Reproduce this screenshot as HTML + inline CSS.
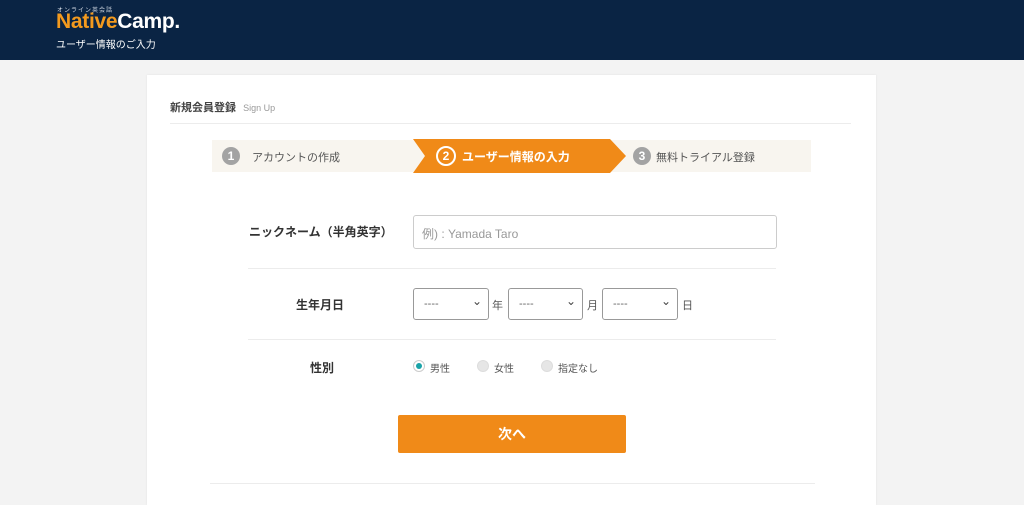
<!DOCTYPE html>
<html><head><meta charset="utf-8"><style>
*{margin:0;padding:0;box-sizing:border-box}
body{width:1024px;height:495px;overflow:hidden;background:#f3f3f3;font-family:"Liberation Sans","Noto Sans CJK JP",sans-serif;position:relative;color:#333}
.a{position:absolute}
.hdr{left:0;top:0;width:1024px;height:60px;background:#0a2444}
.card{left:147px;top:75px;width:729px;height:430px;background:#fff;box-shadow:0 0 2px rgba(0,0,0,.08)}
.hl{height:1px;background:#ececec}
.sel{height:32px;border:1px solid #999;border-radius:3px;background:#fff;font-size:11px;color:#666;padding:9px 10px}
.sel:after{content:"⌄";position:absolute;right:6px;top:5px;font-size:12px;color:#444}
.rad{width:12px;height:12px;border-radius:50%;background:#e6e6e6;border:1px solid #ddd}
.lbl{font-size:12px;font-weight:bold;color:#333}
.sm{font-size:11px;color:#555}
</style></head><body>
<div class="a hdr">
 <div class="a" style="left:57px;top:5px;font-size:6px;color:#cfd6e0;letter-spacing:1px">オンライン英会話</div>
 <div class="a" style="left:56px;top:10px;font-size:21px;font-weight:bold;letter-spacing:-0.3px;color:#fff"><span style="color:#f39a1e">Native</span>Camp.</div>
 <div class="a" style="left:56px;top:36px;font-size:10px;color:#fff">ユーザー情報のご入力</div>
</div>
<div class="a card"></div>
<div class="a" style="left:170px;top:99px;font-size:11px;font-weight:bold;color:#444">新規会員登録 <span style="font-weight:normal;color:#999;font-size:9px;margin-left:4px">Sign Up</span></div>
<div class="a hl" style="left:170px;top:123px;width:681px"></div>
<div class="a" style="left:212px;top:140px;width:599px;height:32px;background:#f8f5ef"></div>
<svg class="a" style="left:412px;top:139px" width="216" height="35"><polygon points="1,0 198,0 214,17 198,34 1,34 13,17" fill="#f08a18"/></svg>
<div class="a" style="left:222px;top:147px;width:18px;height:18px;border-radius:50%;background:#a3a3a3;color:#fff;font-size:12px;font-weight:bold;text-align:center;line-height:18px">1</div>
<div class="a sm" style="left:252px;top:149px">アカウントの作成</div>
<div class="a" style="left:436px;top:146px;width:20px;height:20px;border-radius:50%;border:2px solid #fff;color:#fff;font-size:12px;font-weight:bold;text-align:center;line-height:16px">2</div>
<div class="a" style="left:462px;top:148px;color:#fff;font-size:12px;font-weight:bold">ユーザー情報の入力</div>
<div class="a" style="left:633px;top:147px;width:18px;height:18px;border-radius:50%;background:#a3a3a3;color:#fff;font-size:12px;font-weight:bold;text-align:center;line-height:18px">3</div>
<div class="a sm" style="left:656px;top:149px">無料トライアル登録</div>

<div class="a lbl" style="left:249px;top:223px">ニックネーム（半角英字）</div>
<div class="a" style="left:413px;top:215px;width:364px;height:34px;border:1px solid #ccc;border-radius:3px;font-size:12px;color:#999;padding:9px 8px">例) : Yamada Taro</div>
<div class="a hl" style="left:248px;top:268px;width:528px"></div>
<div class="a lbl" style="left:296px;top:296px">生年月日</div>
<div class="a sel" style="left:413px;top:288px;width:76px">----</div>
<div class="a sm" style="left:492px;top:297px">年</div>
<div class="a sel" style="left:508px;top:288px;width:75px">----</div>
<div class="a sm" style="left:587px;top:297px">月</div>
<div class="a sel" style="left:602px;top:288px;width:76px">----</div>
<div class="a sm" style="left:682px;top:297px">日</div>
<div class="a hl" style="left:248px;top:339px;width:528px"></div>
<div class="a lbl" style="left:310px;top:359px">性別</div>
<div class="a rad" style="left:413px;top:360px;background:#fff;border:1px solid #ccc"><div style="width:6px;height:6px;border-radius:50%;background:#1aa3a8;margin:2px"></div></div>
<div class="a" style="left:430px;top:360px;font-size:10px;color:#555">男性</div>
<div class="a rad" style="left:477px;top:360px"></div>
<div class="a" style="left:494px;top:360px;font-size:10px;color:#555">女性</div>
<div class="a rad" style="left:541px;top:360px"></div>
<div class="a" style="left:558px;top:360px;font-size:10px;color:#555">指定なし</div>
<div class="a" style="left:398px;top:415px;width:228px;height:38px;background:#f08a18;border-radius:2px;color:#fff;font-size:14px;font-weight:bold;text-align:center;line-height:38px">次へ</div>
<div class="a hl" style="left:210px;top:483px;width:605px"></div>
</body></html>
